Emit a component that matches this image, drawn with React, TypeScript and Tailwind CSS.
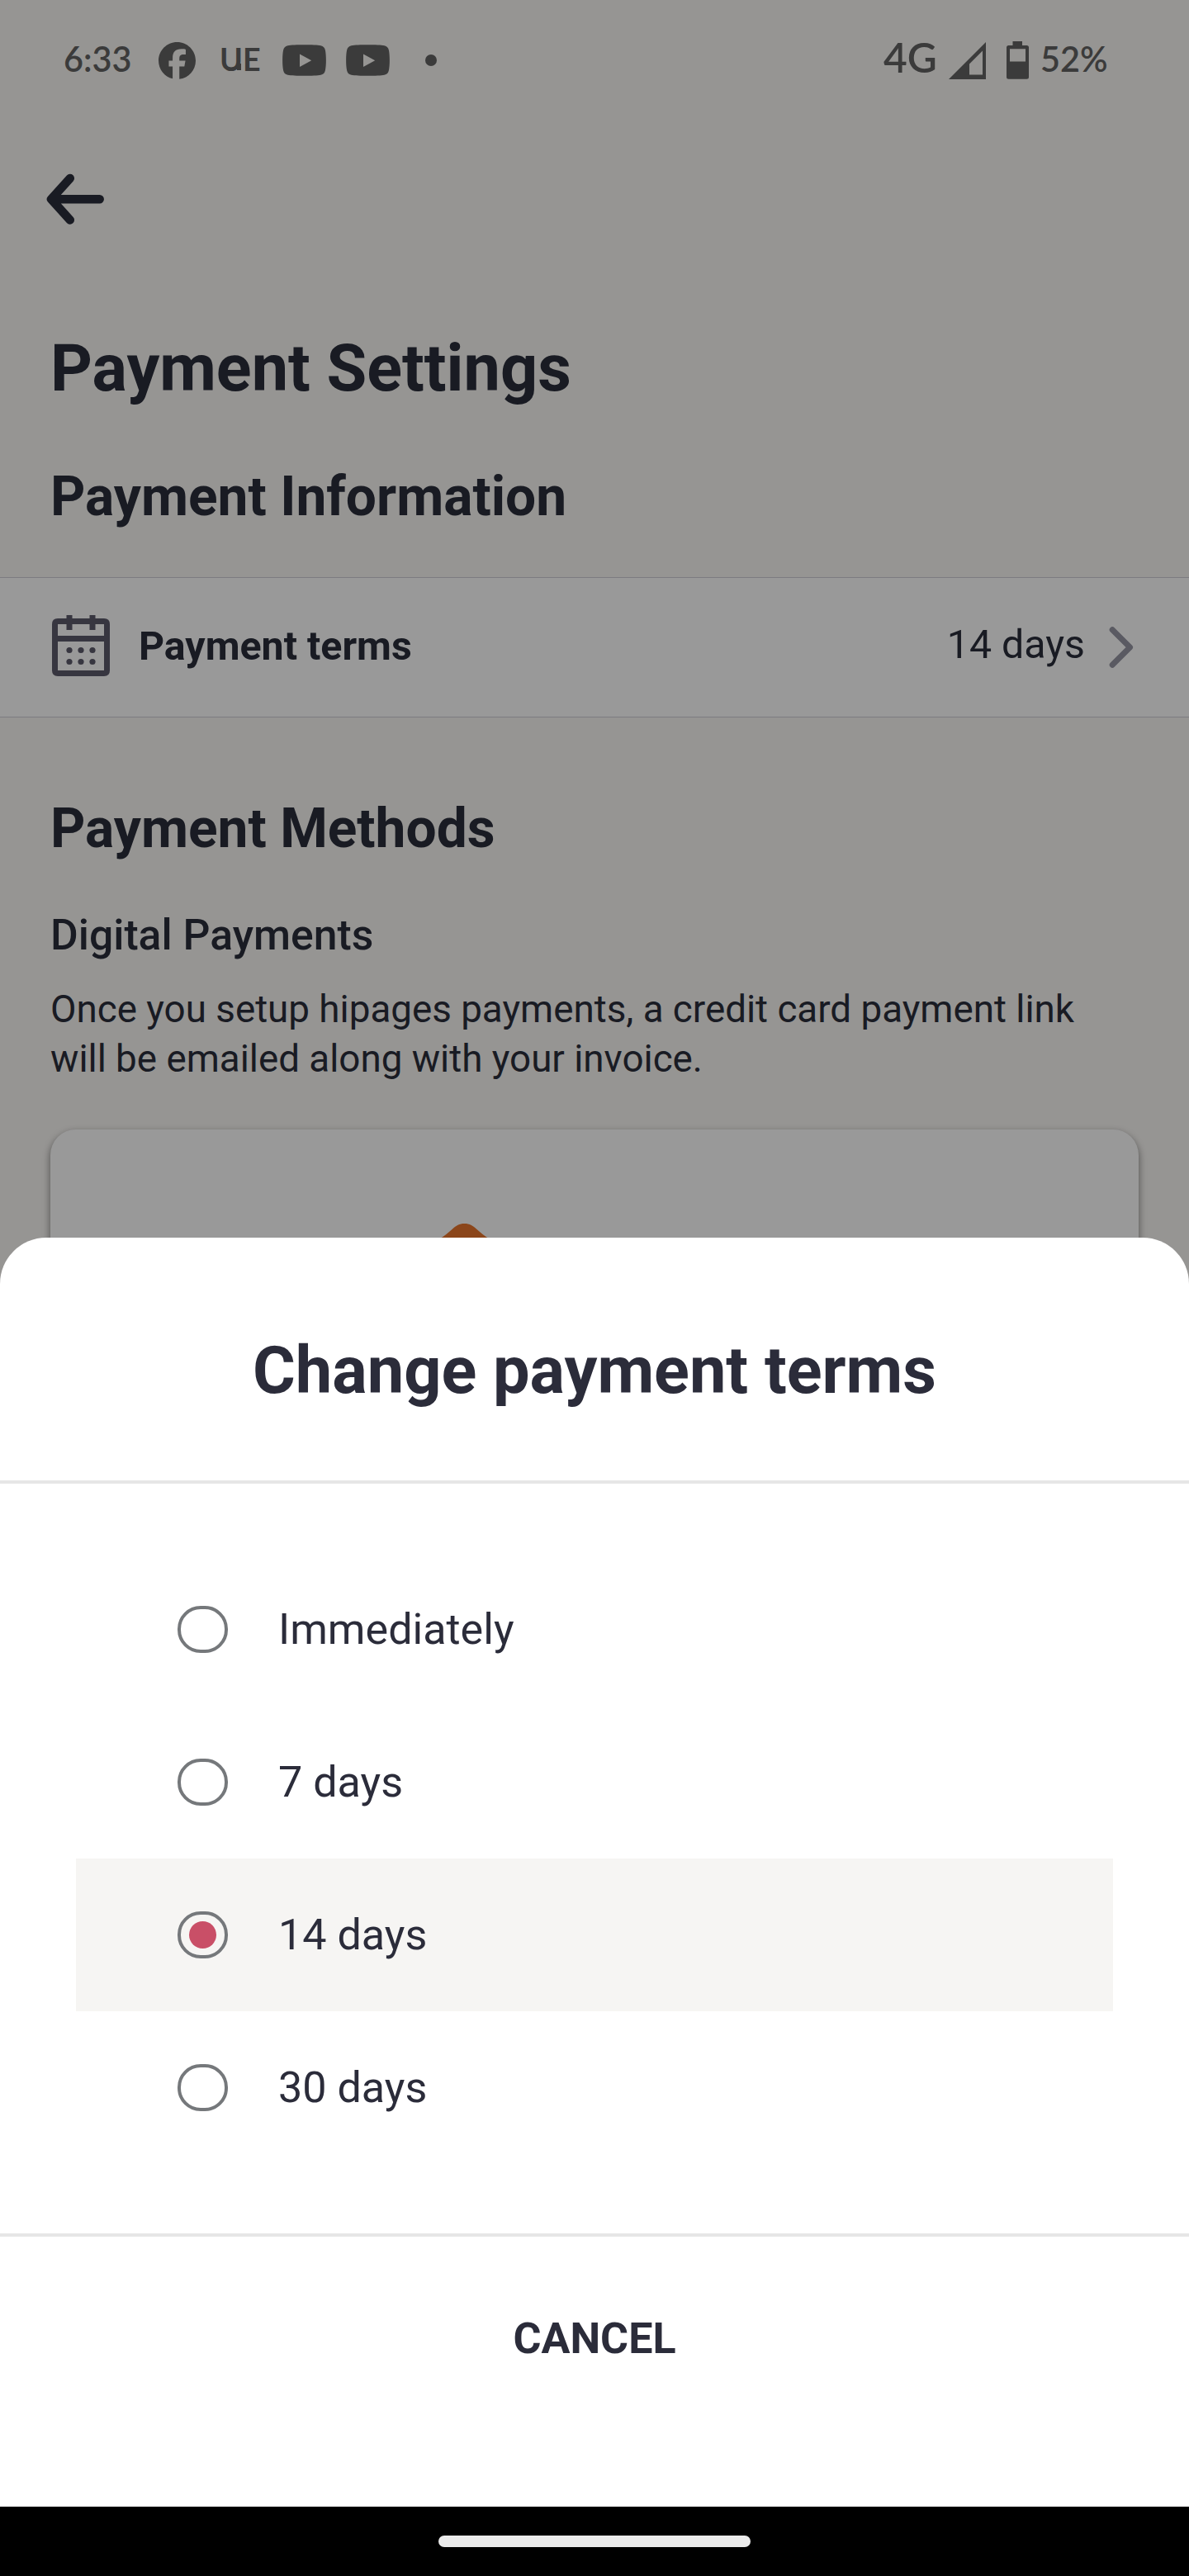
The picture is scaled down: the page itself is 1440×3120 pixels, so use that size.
import React from "react";

const options = [
  { label: "Immediately", selected: false },
  { label: "7 days", selected: false },
  { label: "14 days", selected: true },
  { label: "30 days", selected: false },
];

function FacebookIcon() {
  return (
    <svg className="block h-[45px] w-[45px] shrink-0" viewBox="0 0 24 24" fill="currentColor">
      <path d="M24 12C24 5.37 18.63 0 12 0S0 5.37 0 12c0 5.63 3.87 10.35 9.1 11.65v-7.98H6.63V12H9.1v-1.58c0-4.08 1.85-5.98 5.86-5.98.76 0 2.07.15 2.61.3v3.32c-.28-.03-.78-.04-1.39-.04-1.97 0-2.73.74-2.73 2.68V12h3.92l-.67 3.67h-3.25v8.24C19.4 23.2 24 18.14 24 12Z" />
    </svg>
  );
}

function YoutubeIcon() {
  return (
    <svg className="block h-[38px] w-[53px] shrink-0" viewBox="0 0 53 38" fill="currentColor">
      <path
        fillRule="evenodd"
        d="M26.500 .2C35 .2 43 .4 46.500 1.200C49.600 1.900 51.300 3.800 51.900 6.800C53.200 13 53.200 25 51.900 31.200C51.300 34.200 49.600 36.100 46.500 36.800C43 37.600 35 37.800 26.500 37.800S10 37.600 6.500 36.800C3.400 36.100 1.700 34.200 1.100 31.200C-.2 25-.2 13 1.100 6.800C1.700 3.800 3.400 1.900 6.500 1.200C10 .4 18 .2 26.500 .2ZM21 11.500V27L35.200 19.200Z"
      />
    </svg>
  );
}

function SignalIcon() {
  return (
    <svg className="block h-[45px] w-[45px] shrink-0" viewBox="0 0 45 45" fill="currentColor">
      <path fillRule="evenodd" d="M45 0V45H0ZM41 10.500L25 26.500V39.500H41Z" />
    </svg>
  );
}

function BatteryIcon() {
  return (
    <svg className="block h-[46px] w-[27px] shrink-0" viewBox="0 0 27 46" fill="currentColor">
      <path fillRule="evenodd" d="M7.500 0H19V5H24.500Q27 5 27 7.500V43.200Q27 45.700 24.500 45.700H2.500Q0 45.700 0 43.200V7.500Q0 5 2.500 5H7.500ZM4 9.200V24.500H23V9.200Z" />
    </svg>
  );
}

function BackIcon() {
  return (
    <svg className="block h-[70px] w-[70px]" viewBox="0 0 70 70" fill="none" stroke="currentColor" strokeWidth="10.500" strokeLinecap="round" strokeLinejoin="round">
      <path d="M64.700 35.200H6M28.800 10L6 35.200L28.800 60.400" />
    </svg>
  );
}

function CalendarIcon() {
  return (
    <svg className="block h-[78px] w-[70px] shrink-0" viewBox="0 0 70 78" fill="currentColor">
      <path fillRule="evenodd" d="M7 4H63Q70 4 70 11V67Q70 74 63 74H7Q0 74 0 67V11Q0 4 7 4ZM7 11V25H63V11ZM7 32V67H63V32Z" />
      <path d="M17.500 0H24.500V18H17.500ZM45.500 0H52.500V18H45.500Z" />
      <circle cx="21" cy="42.500" r="3.600" />
      <circle cx="35" cy="42.500" r="3.600" />
      <circle cx="49" cy="42.500" r="3.600" />
      <circle cx="21" cy="56.500" r="3.600" />
      <circle cx="35" cy="56.500" r="3.600" />
      <circle cx="49" cy="56.500" r="3.600" />
    </svg>
  );
}

function ChevronIcon() {
  return (
    <svg className="block h-[52px] w-[30px] shrink-0" viewBox="0 0 30 52" fill="none" stroke="currentColor" strokeWidth="7" strokeLinecap="round" strokeLinejoin="round">
      <path d="M4.200 4.800L25.500 26L4.200 47.200" />
    </svg>
  );
}

function StatusBar() {
  return (
    <div className="flex h-[146px] items-center justify-between pl-[77px] font-['Lato',sans-serif] text-[41.4px] font-semibold leading-none text-[#636363]">
      <div className="flex items-center">
        <span className="w-[115px] pb-[3px]">6:33</span>
        <FacebookIcon />
        <span className="relative ml-[29px] w-[76px] pb-[2px] text-[37.6px] font-bold">
          UE
          <span className="absolute left-[21px] top-[24px] h-[8px] w-[5px] bg-[#636363]" />
        </span>
        <YoutubeIcon />
        <span className="w-[24px]" />
        <YoutubeIcon />
        <span className="ml-[43px] h-[14px] w-[14px] rounded-full bg-[#636363]" />
      </div>
      <div className="flex w-[370px] items-center">
        <span className="w-[79px] pb-[6px] text-[49.6px]">4G</span>
        <SignalIcon />
        <span className="w-[25px]" />
        <BatteryIcon />
        <span className="ml-[14px] pb-[3px]">52%</span>
      </div>
    </div>
  );
}

function SettingsPage() {
  return (
    <div className="text-[#2a2e3b]">
      <StatusBar />
      <div className="pl-[56px] pt-[60px]">
        <BackIcon />
      </div>
      <h1 className="mt-[123px] pl-[61px] text-[79.2px] font-bold leading-[94px]">Payment Settings</h1>
      <h2 className="mt-[70px] pl-[61px] text-[65.85px] font-bold leading-[78px]">Payment Information</h2>
      <div className="mt-[58px] flex h-[170px] items-center border-y border-[#d0ced7] bg-white pl-[63px] pr-[67px] text-[48.3px] leading-[58px]">
        <span className="text-[#5d5a6b]">
          <CalendarIcon />
        </span>
        <span className="ml-[35px] flex-1 pb-[3px] font-bold">Payment terms</span>
        <span className="mr-[29px] pb-[7px]">14 days</span>
        <span className="text-[#9696a3]">
          <ChevronIcon />
        </span>
      </div>
      <h2 className="mt-[96px] pl-[61px] text-[65.85px] font-bold leading-[78px]">Payment Methods</h2>
      <h3 className="mt-[59px] pl-[61px] text-[51.7px] font-medium leading-[62px]">Digital Payments</h3>
      <p className="mt-[29px] pl-[61px] text-[45.75px] leading-[59.5px]">
        Once you setup hipages payments, a credit card payment link
        <br />
        will be emailed along with your invoice.
      </p>
      <div className="mx-[61px] mt-[56px] h-[400px] rounded-[31px] bg-white pl-[441px] pt-[114px] shadow-[0_4px_9px_1px_rgba(0,0,0,0.4)]">
        <svg className="block h-[60px] w-[121px]" viewBox="0 0 121 60" fill="#e8762d">
          <path d="M60.500 0C67 0 70.500 2.500 75 6.500C80 11 85 15.500 91 18.500L121 48V60H0V48L30 18.500C36 15.500 41 11 46 6.500C50.500 2.500 54 0 60.500 0Z" />
        </svg>
      </div>
    </div>
  );
}

function Radio({ selected }: { selected: boolean }) {
  return (
    <span className="flex h-[57px] w-[61px] shrink-0 items-center justify-center rounded-[28px] border-4 border-[#75787b]">
      {selected && <span className="h-[33px] w-[33px] rounded-full bg-[#c94f67]" />}
    </span>
  );
}

function TermsSheet() {
  return (
    <div className="absolute inset-x-0 bottom-[84px] h-[1537px] rounded-t-[56px] bg-white text-[#2b2c3a]">
      <div className="h-[298px] border-b-4 border-[#e6e6e6] pt-[114px] text-center text-[79.3px] font-bold leading-[94px]">
        Change payment terms
      </div>
      <div className="px-[92px] py-[84px]">
        {options.map((o) => (
          <div
            key={o.label}
            className={
              o.selected
                ? "flex h-[185px] items-center bg-[#f6f5f3] pl-[123px]"
                : "flex h-[185px] items-center pl-[123px]"
            }
          >
            <Radio selected={o.selected} />
            <span className="ml-[61px] text-[52.1px] leading-[62px]">{o.label}</span>
          </div>
        ))}
      </div>
      <div className="border-t-4 border-[#e6e6e6] pt-[93px] text-center text-[52px] font-bold leading-[62px]">
        CANCEL
      </div>
    </div>
  );
}

export default function App() {
  return (
    <div className="relative h-[3120px] w-[1440px] overflow-hidden bg-[#faf8f5] font-['Roboto',sans-serif]">
      <SettingsPage />
      <div className="absolute inset-0 bg-black/40" />
      <TermsSheet />
      <div className="absolute inset-x-0 bottom-0 flex h-[84px] justify-center bg-black pt-[35px]">
        <div className="h-[14px] w-[378px] rounded-full bg-[#ebebeb]" />
      </div>
    </div>
  );
}
